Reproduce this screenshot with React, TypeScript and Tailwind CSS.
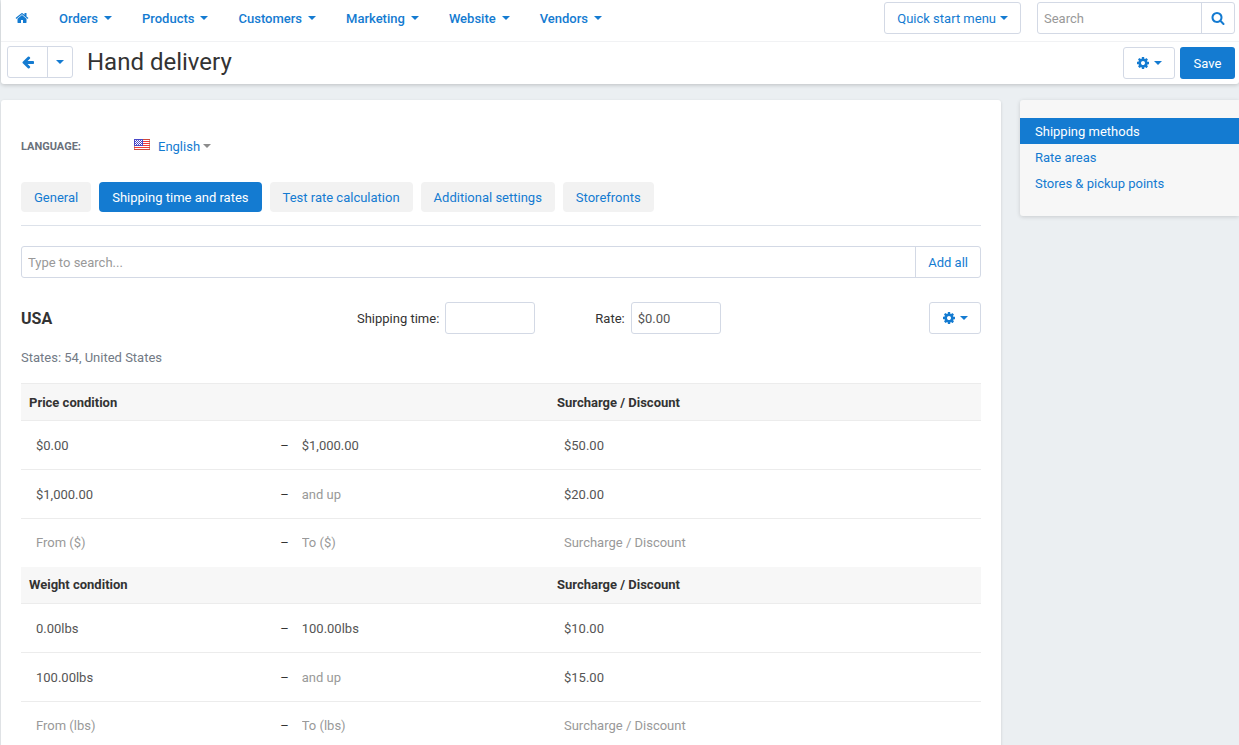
import React from "react";
import clsx from "clsx";

type Condition = {
  from: string;
  to: string;
  surcharge: string;
};

type ConditionGroup = {
  title: string;
  fromPlaceholder: string;
  toPlaceholder: string;
  rows: Condition[];
};

const NAV_ITEMS = ["Orders", "Products", "Customers", "Marketing", "Website", "Vendors"];

const TABS = [
  "General",
  "Shipping time and rates",
  "Test rate calculation",
  "Additional settings",
  "Storefronts",
];

const SIDEBAR_LINKS = ["Shipping methods", "Rate areas", "Stores & pickup points"];

const GROUPS: ConditionGroup[] = [
  {
    title: "Price condition",
    fromPlaceholder: "From ($)",
    toPlaceholder: "To ($)",
    rows: [
      { from: "$0.00", to: "$1,000.00", surcharge: "$50.00" },
      { from: "$1,000.00", to: "", surcharge: "$20.00" },
    ],
  },
  {
    title: "Weight condition",
    fromPlaceholder: "From (lbs)",
    toPlaceholder: "To (lbs)",
    rows: [
      { from: "0.00lbs", to: "100.00lbs", surcharge: "$10.00" },
      { from: "100.00lbs", to: "", surcharge: "$15.00" },
    ],
  },
];

const ICONS = {
  home: "M1472 992v480q0 26-19 45t-45 19h-384v-384h-256v384h-384q-26 0-45-19t-19-45v-480q0-1 .5-3t.5-3l575-474 575 474q1 2 1 6zm223-69l-62 74q-8 9-21 11h-3q-13 0-21-7l-692-577-692 577q-12 8-24 7-13-2-21-11l-62-74q-8-10-7-23.5t11-21.5l719-599q32-26 76-26t76 26l244 204v-195q0-14 9-23t23-9h192q14 0 23 9t9 23v408l219 182q10 8 11 21.5t-7 23.5z",
  cog: "M1152 896q0-106-75-181t-181-75-181 75-75 181 75 181 181 75 181-75 75-181zm512-109v222q0 12-8 23t-20 13l-185 28q-19 54-39 91 35 50 107 138 10 12 10 25t-9 23q-27 37-99 108t-94 71q-12 0-26-9l-138-108q-44 23-91 38-16 136-29 186-7 28-36 28h-222q-14 0-24.5-8.5t-11.5-21.5l-28-184q-49-16-90-37l-141 107q-10 9-25 9-14 0-25-11-126-114-165-168-7-10-7-23 0-12 8-23 15-21 51-66.5t54-70.5q-27-50-41-99l-183-27q-13-2-21-12.5t-8-23.5v-222q0-12 8-23t19-13l186-28q14-46 39-92-40-57-107-138-10-12-10-24 0-10 9-23 26-36 98.5-107.5t94.5-71.5q13 0 26 10l138 107q44-23 91-38 16-136 29-186 7-28 36-28h222q14 0 24.5 8.5t11.5 21.5l28 184q49 16 90 37l142-107q9-9 24-9 13 0 25 10 129 119 165 170 7 8 7 22 0 12-8 23-15 21-51 66.5t-54 70.5q26 50 41 98l183 28q13 2 21 12.5t8 23.5z",
  search:
    "M1216 832q0-185-131.5-316.5t-316.5-131.5-316.5 131.5-131.5 316.5 131.5 316.5 316.5 131.5 316.5-131.5 131.5-316.5zm512 832q0 52-38 90t-90 38q-54 0-90-38l-343-342q-179 124-399 124-143 0-273.5-55.5t-225-150-150-225-55.5-273.5 55.5-273.5 150-225 225-150 273.5-55.5 273.5 55.5 225 150 150 225 55.5 273.5q0 220-124 399l343 343q37 37 37 90z",
  arrowLeft:
    "M1664 896v128q0 53-32.5 90.5t-84.5 37.5h-704l293 294q38 36 38 90t-38 90l-75 76q-37 37-90 37-52 0-91-37l-651-652q-37-37-37-90 0-52 37-91l651-650q38-38 91-38 52 0 90 38l75 74q38 38 38 91t-38 91l-293 293h704q52 0 84.5 37.5t32.5 90.5z",
};

const Icon: React.FC<{ name: keyof typeof ICONS }> = ({ name }) => (
  <svg viewBox="0 0 1792 1792" className="size-[14px] shrink-0 fill-current" aria-hidden="true">
    <path d={ICONS[name]} />
  </svg>
);

const Caret: React.FC = () => (
  <svg viewBox="0 0 8 4" className="h-1 w-2 shrink-0 fill-current" aria-hidden="true">
    <path d="M0 0h8L4 4z" />
  </svg>
);

const UsFlag: React.FC = () => (
  <svg viewBox="0 0 16 11" className="mb-[3px] h-[11px] w-4 shrink-0" aria-hidden="true">
    <path fill="#fff" d="M0 0h16v11H0z" />
    <path
      stroke="#f03a3a"
      d="M0 .5h16M0 2.5h16M0 4.5h16M0 6.5h16M0 8.5h16M0 10.5h16"
    />
    <path fill="none" stroke="#b5533c" strokeOpacity=".6" d="M.5 .5h15v10H.5z" />
    <path fill="#4a49c8" d="M0 0h9v7H0z" />
    <path
      stroke="#fff"
      strokeDasharray="1 1"
      d="M1 1.5h7M2 2.5h6M1 3.5h7M2 4.5h6M1 5.5h7"
    />
  </svg>
);

const TopNav: React.FC = () => (
  <div className="flex h-[42px] items-start justify-between border-b border-[#f1f2f4] pr-1 pl-[14px]">
    <nav className="flex h-9 items-center gap-[30px] text-[13px] font-medium">
      <a href="#" aria-label="Home">
        <Icon name="home" />
      </a>
      {NAV_ITEMS.map((item) => (
        <a key={item} href="#" className="flex items-center gap-[6px]">
          {item}
          <Caret />
        </a>
      ))}
    </nav>
    <div className="flex gap-4 pt-[2px]">
      <button
        type="button"
        className="flex h-8 items-center gap-1 rounded-[3px] border border-[#d3d9e5] px-3"
      >
        Quick start menu
        <Caret />
      </button>
      <div className="flex h-8 w-[198px] rounded-[3px] border border-[#d3d9e5]">
        <input
          type="text"
          aria-label="Search"
          placeholder="Search"
          className="min-w-0 flex-1 px-[6px] text-[#555] placeholder:text-[#999]"
        />
        <button
          type="button"
          aria-label="Submit search"
          className="flex w-[33px] items-center justify-center border-l border-[#d3d9e5]"
        >
          <Icon name="search" />
        </button>
      </div>
    </div>
  </div>
);

const TitleBar: React.FC = () => (
  <div className="flex h-[42px] items-center justify-between pr-1 pl-[6px]">
    <div className="flex items-center gap-[14px] self-start pt-1">
      <div className="flex h-8 rounded-[3px] border border-[#d3d9e5]">
        <button type="button" aria-label="Back" className="flex w-[39px] items-center justify-center">
          <Icon name="arrowLeft" />
        </button>
        <button
          type="button"
          aria-label="Recent pages"
          className="flex w-[25px] items-center justify-center border-l border-[#d3d9e5]"
        >
          <Caret />
        </button>
      </div>
      <h1 className="text-2xl leading-8 text-[#333]">Hand delivery</h1>
    </div>
    <div className="flex gap-[5px]">
      <SettingsButton label="Page actions" />
      <button type="button" className="h-8 w-[55px] rounded-[3px] bg-[#147bd1] text-white">
        Save
      </button>
    </div>
  </div>
);

const SettingsButton: React.FC<{ label: string }> = ({ label }) => (
  <button
    type="button"
    aria-label={label}
    className="flex h-8 items-center gap-1 rounded-[3px] border border-[#d3d9e5] px-3"
  >
    <Icon name="cog" />
    <Caret />
  </button>
);

const Field: React.FC<{ id: string; label: string; value?: string }> = ({ id, label, value }) => (
  <div className="flex items-center gap-[6px] text-[#333]">
    <label htmlFor={id}>{label}</label>
    <input
      id={id}
      type="text"
      defaultValue={value}
      className="h-8 w-[90px] rounded-[3px] border border-[#d3d9e5] px-[6px] text-[#555]"
    />
  </div>
);

const CellInput: React.FC<{ label: string; value?: string; placeholder?: string }> = ({
  label,
  value,
  placeholder,
}) => (
  <input
    type="text"
    aria-label={label}
    defaultValue={value}
    placeholder={placeholder}
    className="h-8 w-40 px-[7px] text-[#555] placeholder:text-[#999]"
  />
);

const ConditionRow: React.FC<{ group: ConditionGroup; row?: Condition }> = ({ group, row }) => (
  <tr className={clsx(row ? "h-[49px] border-b border-[#ececec]" : "h-12")}>
    <td className="pl-2">
      <CellInput label="From" value={row?.from} placeholder={group.fromPlaceholder} />
    </td>
    <td>
      <div className="flex items-center gap-[6px] text-[#333]">
        <span>–</span>
        <CellInput label="To" value={row?.to} placeholder={row ? "and up" : group.toPlaceholder} />
      </div>
    </td>
    <td className="pl-2">
      <CellInput
        label="Surcharge or discount"
        value={row?.surcharge}
        placeholder="Surcharge / Discount"
      />
    </td>
  </tr>
);

const ConditionsTable: React.FC = () => (
  <table className="mt-4 w-full table-fixed border-t border-[#ececec] text-left">
    <colgroup>
      <col className="w-[27%]" />
      <col className="w-[28%]" />
      <col className="w-[45%]" />
    </colgroup>
    {GROUPS.map((group) => (
      <tbody key={group.title}>
        <tr className="h-[37px] border-b border-[#ececec] bg-[#f7f7f7] text-[#333]">
          <th colSpan={2} className="pl-2 font-bold">
            {group.title}
          </th>
          <th className="pl-2 font-bold">Surcharge / Discount</th>
        </tr>
        {group.rows.map((row) => (
          <ConditionRow key={row.from} group={group} row={row} />
        ))}
        {/* Blank row for adding a condition */}
        <ConditionRow group={group} />
      </tbody>
    ))}
  </table>
);

const Sidebar: React.FC = () => (
  <aside className="w-[219px] shrink-0 rounded-l-[3px] bg-[#f7f7f7] pt-[18px] pb-5 shadow-[0_1px_4px_rgba(0,0,0,0.15)]">
    {SIDEBAR_LINKS.map((link, index) => (
      <a
        key={link}
        href="#"
        className={clsx(
          "flex h-[26px] items-center pl-[15px]",
          index === 0 && "bg-[#147bd1] text-white"
        )}
      >
        {link}
      </a>
    ))}
  </aside>
);

export default function App() {
  return (
    <div className="h-screen overflow-hidden bg-[#ebeff2] pl-px font-['Roboto',sans-serif] text-[13px] leading-[normal] text-[#147bd1]">
      <header className="rounded-b-[3px] bg-white shadow-[0_1px_4px_rgba(0,0,0,0.2)]">
        <TopNav />
        <TitleBar />
      </header>

      <div className="mt-4 flex items-start gap-[19px]">
        <main className="min-w-0 flex-1 rounded-[3px] bg-white px-5 pt-9 pb-10 shadow-[0_1px_3px_rgba(0,0,0,0.15)]">
          {/* Language */}
          <div className="flex h-5 items-center">
            <span className="w-[113px] text-[11px] font-bold text-[#6a717b] uppercase">Language:</span>
            <button type="button" className="flex items-center gap-2">
              <UsFlag />
              <span className="flex items-center gap-[3px]">
                English
                <span className="text-[#8c8c8c]">
                  <Caret />
                </span>
              </span>
            </button>
          </div>

          {/* Tabs */}
          <div className="mt-[26px] flex gap-2 border-b border-[#dde2ea] pb-[13px]">
            {TABS.map((tab, index) => (
              <button
                key={tab}
                type="button"
                className={clsx(
                  "h-[30px] rounded-[4px] px-[13px]",
                  index === 1 ? "bg-[#147bd1] text-white" : "bg-[#f2f2f2]"
                )}
              >
                {tab}
              </button>
            ))}
          </div>

          <div className="mt-5 flex h-8 rounded-[3px] border border-[#d3d9e5]">
            <input
              type="text"
              aria-label="Search rate areas"
              placeholder="Type to search..."
              className="min-w-0 flex-1 px-[6px] text-[#555] placeholder:text-[#999]"
            />
            <button type="button" className="border-l border-[#d3d9e5] px-3">
              Add all
            </button>
          </div>

          <div className="mt-6 flex items-center justify-between">
            <div className="flex flex-1 items-center">
              <h2 className="w-[37%] min-w-24 pr-2 text-base leading-[normal] font-bold text-[#333]">
                USA
              </h2>
              <div className="flex gap-[60px]">
                <Field id="shipping-time" label="Shipping time:" />
                <Field id="rate" label="Rate:" value="$0.00" />
              </div>
            </div>
            <SettingsButton label="USA actions" />
          </div>
          <p className="mt-[14px] leading-[19px] text-[#727a85]">States: 54, United States</p>

          <ConditionsTable />
        </main>

        <Sidebar />
      </div>
    </div>
  );
}
